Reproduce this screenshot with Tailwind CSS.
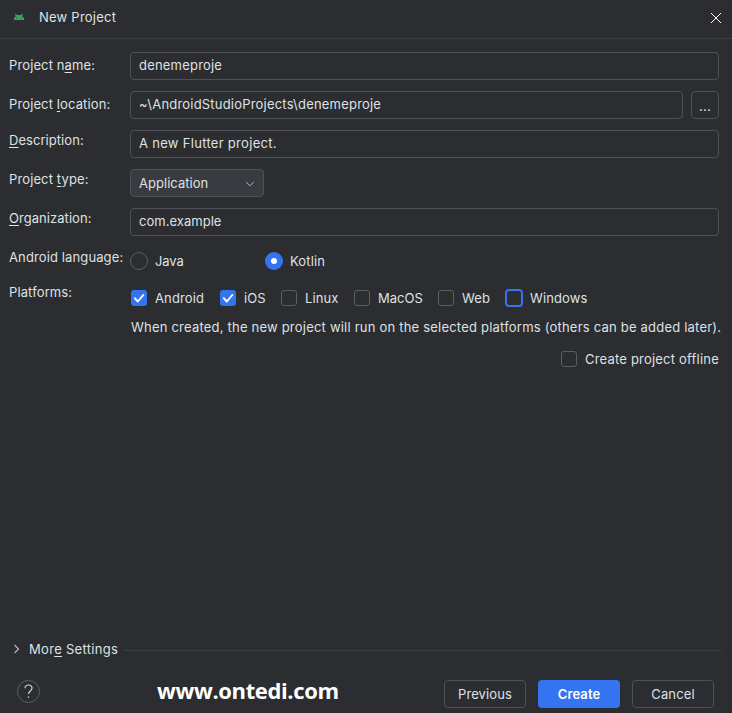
<!DOCTYPE html>
<html lang="en">
<head>
<meta charset="utf-8">
<title>New Project</title>
<script src="https://cdn.jsdelivr.net/npm/@tailwindcss/browser@4"></script>
</head>
<body class="bg-[#2b2d30]">
<div class="flex h-[713px] w-[732px] flex-col overflow-hidden bg-[#2b2d30] font-['Inter','Liberation_Sans',sans-serif] text-[13px] leading-5 tracking-[0.12px] whitespace-nowrap text-[#dfe1e5]">
  <header class="flex h-[39px] shrink-0 items-center border-b border-[#3c3e42] pr-[10px] pb-[3px] pl-[14px]">
    <svg class="mt-[-2px] h-[6px] w-[10px]" viewBox="0 0 10 6"><path d="M1 0h1l1 1h4l1-1h1v1L8 2l1 1 1 1v2H0V4l1-1 1-1-1-1Z" fill="#3ba45c"/><path d="M2 3.500h1v1H2zM7 3.500h1v1H7z" fill="#2b5a3c"/></svg>
    <h1 class="mt-[-2px] ml-[15px] tracking-[0.23px]">New Project</h1>
    <svg class="ml-auto h-3 w-3" viewBox="0 0 12 12" fill="none" stroke="#fff" stroke-width="1"><path d="M1 1l10 10M11 1L1 11"/></svg>
  </header>

  <main class="flex flex-col pt-[13px] pl-[9px]">
    <div class="flex h-[39px]">
      <label class="w-[121px] pt-[3px]">Project n<u class="underline underline-offset-2">a</u>me:</label>
      <div class="h-7 w-[589px] rounded-[4px] border border-[#4e5157] px-2 pt-[2px] tracking-[0.2px]">denemeproje</div>
    </div>
    <div class="flex h-[39px]">
      <label class="w-[121px] pt-[3px]">Project <u class="underline underline-offset-2">l</u>ocation:</label>
      <div class="h-7 w-[553px] rounded-[4px] border border-[#4e5157] px-2 pt-[2px] tracking-[0.2px]">~\AndroidStudioProjects\denemeproje</div>
      <button class="ml-2 h-7 w-7 rounded-[4px] border border-[#4e5157] pt-[2px] tracking-[0.3px]">...</button>
    </div>
    <div class="flex h-[39px]">
      <label class="w-[121px] tracking-[0.05px]"><u class="underline underline-offset-2">D</u>escription:</label>
      <div class="h-7 w-[589px] rounded-[4px] border border-[#4e5157] px-2 pt-[2px] tracking-[0.3px]">A new Flutter project.</div>
    </div>
    <div class="flex h-[39px]">
      <label class="w-[121px]">Project <u class="underline underline-offset-2">t</u>ype:</label>
      <div class="flex h-7 w-[134px] items-center justify-between rounded-[4px] border border-[#4e5157] bg-[#393b40] pr-2 pl-2 tracking-[0.03px]">Application
        <svg class="mt-[2px] h-2 w-[10px]" viewBox="0 0 10 8" fill="none" stroke="#b4b8bf"><path d="M1.200 2L5 5.800L8.800 2"/></svg>
      </div>
    </div>
    <div class="flex h-[39px]">
      <label class="w-[121px] tracking-[0.05px]"><u class="underline underline-offset-2">O</u>rganization:</label>
      <div class="h-7 w-[589px] rounded-[4px] border border-[#4e5157] px-2 pt-[2px] tracking-[0.03px]">com.example</div>
    </div>
    <div class="flex h-[35px]">
      <span class="w-[121px]">Android language:</span>
      <div class="flex h-7 items-center">
        <span class="size-[18px] rounded-full border border-[#5a5d63]"></span><span class="ml-[7px] w-[110px] tracking-[-0.1px]">Java</span>
        <span class="flex size-[18px] items-center justify-center rounded-full bg-[#3574f0]"><i class="size-[6px] rounded-full bg-white"></i></span><span class="ml-[7px]">Kotlin</span>
      </div>
    </div>
    <div class="flex h-[35px]">
      <span class="w-[122px]">Platforms:</span>
      <div class="flex h-8 items-center">
        <span class="flex w-[89px] items-center gap-2"><svg class="size-4" viewBox="0 0 16 16" fill="none"><rect width="16" height="16" rx="3" fill="#3574f0"/><path d="M3.800 8.200l3 3.300L12.300 5" stroke="#fff" stroke-width="1.900" stroke-linecap="round" stroke-linejoin="round"/></svg>Android</span>
        <span class="flex w-[61px] items-center gap-2"><svg class="size-4" viewBox="0 0 16 16" fill="none"><rect width="16" height="16" rx="3" fill="#3574f0"/><path d="M3.800 8.200l3 3.300L12.300 5" stroke="#fff" stroke-width="1.900" stroke-linecap="round" stroke-linejoin="round"/></svg>iOS</span>
        <span class="flex w-[73px] items-center gap-2"><i class="size-4 rounded-[3px] border border-[#5a5d63]"></i>Linux</span>
        <span class="flex w-[84px] items-center gap-2 tracking-normal"><i class="size-4 rounded-[3px] border border-[#5a5d63]"></i>MacOS</span>
        <span class="flex w-[67px] items-center gap-2"><i class="size-4 rounded-[3px] border border-[#5a5d63]"></i>Web</span>
        <span class="flex items-center gap-[7px]"><i class="size-[18px] rounded-[4px] border-2 border-[#3574f0]"></i>Windows</span>
      </div>
    </div>
    <p class="h-[32px] pl-[122px] tracking-[0.21px]">When created, the new project will run on the selected platforms (others can be added later).</p>
    <div class="flex items-center gap-2 pl-[552px] tracking-[0.2px]"><i class="size-4 rounded-[3px] border border-[#5a5d63]"></i>Create project offline</div>
  </main>

  <div class="mt-auto mb-px flex h-5 items-center pr-[10px] pl-[13px]">
    <svg class="h-[10px] w-2" viewBox="0 0 8 10" fill="none" stroke="#b4b8bf" stroke-width="1.200"><path d="M1.500 1L5.500 5L1.500 9"/></svg>
    <span class="ml-2 tracking-[0.3px]">Mor<u class="underline underline-offset-2">e</u> Settings</span>
    <span class="mt-[2px] ml-[6px] h-px flex-1 bg-[#3c3e42]"></span>
  </div>
  <footer class="flex h-[53px] shrink-0 items-start pt-5 pl-[17px]">
    <span class="flex size-[23px] items-center justify-center rounded-full border border-[#5a5d63] text-[#ced0d6]">
      <svg class="h-[15px] w-[9px]" viewBox="0 0 9 15" fill="none" stroke="currentColor" stroke-width="1.200"><path d="M1 4.200C1 2.200 2.400 1 4.500 1S8 2.200 8 4.100c0 2.700-3.500 3.100-3.500 6"/><circle cx="4.500" cy="13" r=".8" fill="currentColor" stroke="none"/></svg>
    </span>
    <strong class="ml-[117px] w-[287px] font-['Open_Sans','Noto_Sans',sans-serif] text-[22px] tracking-[-0.37px] text-white">www.ontedi.com</strong>
    <button class="h-7 w-[82px] rounded-[4px] border border-[#4e5157]">Previous</button>
    <button class="ml-3 h-7 w-[82px] rounded-[4px] bg-[#3574f0] font-semibold text-white">Create</button>
    <button class="ml-3 h-7 w-[82px] rounded-[4px] border border-[#4e5157]">Cancel</button>
  </footer>
</div>
</body>
</html>
